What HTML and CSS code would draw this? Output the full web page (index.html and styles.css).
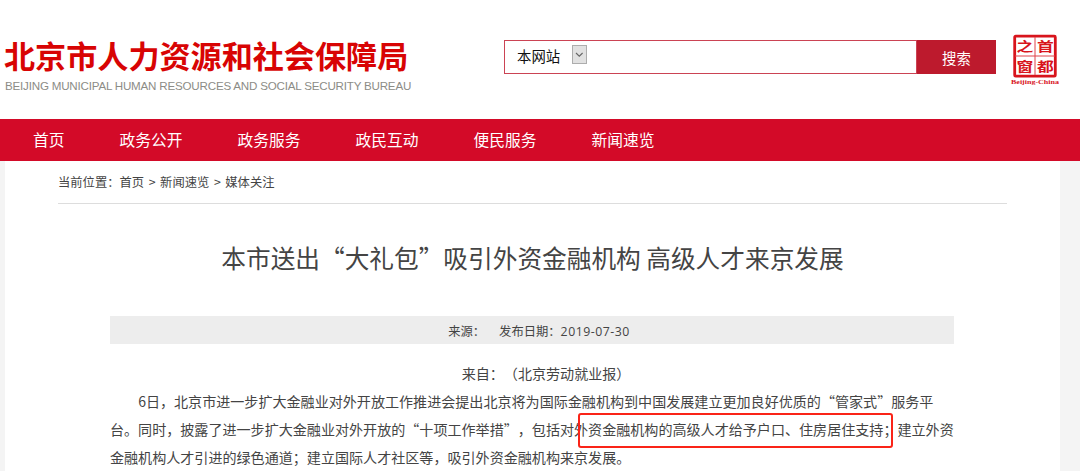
FILE: index.html
```html
<!DOCTYPE html>
<html lang="zh-CN">
<head>
  <meta charset="utf-8">
  <title>北京市人力资源和社会保障局</title>
  <link rel="stylesheet" href="styles.css">
</head>
<body>
  <header class="header">
    <div class="logo">
      <h1>北京市人力资源和社会保障局</h1>
      <p>BEIJING MUNICIPAL HUMAN RESOURCES AND SOCIAL SECURITY BUREAU</p>
    </div>
    <div class="search">
      <div class="search-box">
        <span>本网站</span>
        <svg class="arrow" width="15" height="19" viewBox="0 0 15 19">
          <rect x="0.5" y="0.5" width="14" height="18" fill="#e1e1e1" stroke="#adadad"/>
          <path d="M4 8l3.3 3.2L10.6 8" fill="none" stroke="#666" stroke-width="1.1"/>
        </svg>
      </div>
      <button class="search-btn">搜索</button>
    </div>
    <svg class="seal" width="50" height="52" viewBox="0 0 50 52">
      <rect x="4.7" y="2.2" width="40.6" height="40" rx="1" fill="#fff" stroke="#d8141c" stroke-width="2.8"/>
      <path d="M25 3v38M5 22h40" stroke="#e0444a" stroke-width="1"/>
      <g class="seal-text">
        <text transform="translate(6.6 17.2) scale(1.12 .84)">之</text>
        <text transform="translate(27 17.2) scale(1.12 .84)">首</text>
        <text transform="translate(6.6 37) scale(1.12 .84)">窗</text>
        <text transform="translate(27 37) scale(1.12 .84)">都</text>
      </g>
      <text class="seal-en" x="1" y="50" textLength="48" lengthAdjust="spacingAndGlyphs">Beijing-China</text>
    </svg>
  </header>

  <nav class="nav">
    <ul>
      <li><a href="#">首页</a></li>
      <li><a href="#">政务公开</a></li>
      <li><a href="#">政务服务</a></li>
      <li><a href="#">政民互动</a></li>
      <li><a href="#">便民服务</a></li>
      <li><a href="#">新闻速览</a></li>
    </ul>
  </nav>

  <div class="container">
    <div class="position">当前位置：<a href="#">首页</a><i>&gt;</i><a href="#">新闻速览</a><i>&gt;</i><a href="#">媒体关注</a></div>
    <h2 class="title">本市送出“大礼包”吸引外资金融机构 高级人才来京发展</h2>
    <div class="info">
      <span>来源：</span>
      <span>发布日期：<b>2019-07-30</b></span>
    </div>
    <div class="content">
      <p class="from">来自：（北京劳动就业报）</p>
      <p>6日，北京市进一步扩大金融业对外开放工作推进会提出北京将为国际金融机构到中国发展建立更加良好优质的“管家式”服务平<br>台。同时，披露了进一步扩大金融业对外开放的“十项工作举措”，包括对外资金融机构的高级人才给予户口、住房居住支持；建立外资<br>金融机构人才引进的绿色通道；建立国际人才社区等，吸引外资金融机构来京发展。</p>
      <div class="mark"></div>
    </div>
  </div>
</body>
</html>
```
FILE: styles.css
```css
* {
  margin: 0;
  padding: 0;
  box-sizing: border-box;
}

body {
  height: 471px;
  overflow: hidden;
  background-color: #f4f4f4;
  color: #444;
  font-family: "Noto Sans CJK SC", sans-serif;
  text-spacing-trim: space-all;
}

a {
  color: inherit;
  text-decoration: none;
}

.header {
  display: flex;
  align-items: flex-start;
  height: 119px;
  padding-left: 4px;
  background-color: #fff;
}

.logo {
  width: 500px;
  padding-top: 36px;
  white-space: nowrap;
}

.logo h1 {
  font-size: 31.1px;
  line-height: 38px;
  font-weight: bold;
  color: #d80404;
}

.logo p {
  padding: 2px 0 0 1px;
  font-family: "Liberation Sans", Arial, sans-serif;
  font-size: 11.6px;
  line-height: 20px;
  letter-spacing: -0.2px;
  color: #8c8c86;
}

.search {
  display: flex;
  width: 492px;
  height: 34px;
  margin-top: 40px;
}

.search-box {
  display: flex;
  width: 413px;
  padding: 3px 0 0 12px;
  border: 1px solid #cb4354;
  font-size: 14.4px;
  line-height: 24px;
  color: #111;
}

.arrow {
  margin: 1px 0 0 12px;
}

.search-btn {
  width: 79px;
  border: none;
  background-color: #bd1a2d;
  color: #fff;
  font-family: inherit;
  font-size: 14.4px;
}

.seal {
  margin: 34px 0 0 14px;
}

.seal-text {
  font-family: "Noto Sans CJK SC", sans-serif;
  font-size: 15px;
  font-weight: bold;
  fill: #d8141c;
}

.seal-en {
  font-family: "Liberation Serif", serif;
  font-size: 7px;
  font-weight: bold;
  fill: #d8141c;
}

.nav {
  height: 42px;
  background-color: #d30a28;
}

.nav ul {
  display: flex;
  gap: 55px;
  padding-left: 33px;
  list-style: none;
}

.nav li {
  font-size: 15.75px;
  line-height: 42px;
  color: #fff;
}

.container {
  width: 1055px;
  height: 310px;
  margin-left: 5px;
  padding: 0 53px;
  background-color: #fff;
}

.position {
  height: 43px;
  border-bottom: 1px solid #ddd;
  font-size: 12.3px;
  line-height: 43px;
}

.position i {
  display: inline-block;
  width: 16px;
  font-style: normal;
  text-align: center;
}

.title {
  height: 112px;
  font-size: 24.68px;
  line-height: 106px;
  font-weight: normal;
  text-align: center;
}

.info {
  display: flex;
  justify-content: center;
  gap: 14px;
  width: 844px;
  height: 28px;
  margin: 0 auto 0 52px;
  padding-left: 14px;
  background-color: #ededed;
  font-size: 12.3px;
  line-height: 30px;
}

.info b {
  font-family: "Open Sans", sans-serif;
  font-weight: normal;
  letter-spacing: 0.5px;
}

.content {
  position: relative;
  width: 844px;
  margin: 15px 0 0 52px;
  font-size: 14.07px;
  line-height: 28.1px;
  white-space: nowrap;
}

.content p {
  text-indent: 2em;
}

.content .from {
  text-align: center;
}

/* red frame over the highlighted sentence */
.mark {
  position: absolute;
  left: 468px;
  top: 54px;
  width: 315px;
  height: 35px;
  border: 2px solid #fa2418;
  border-radius: 3px;
}
```
